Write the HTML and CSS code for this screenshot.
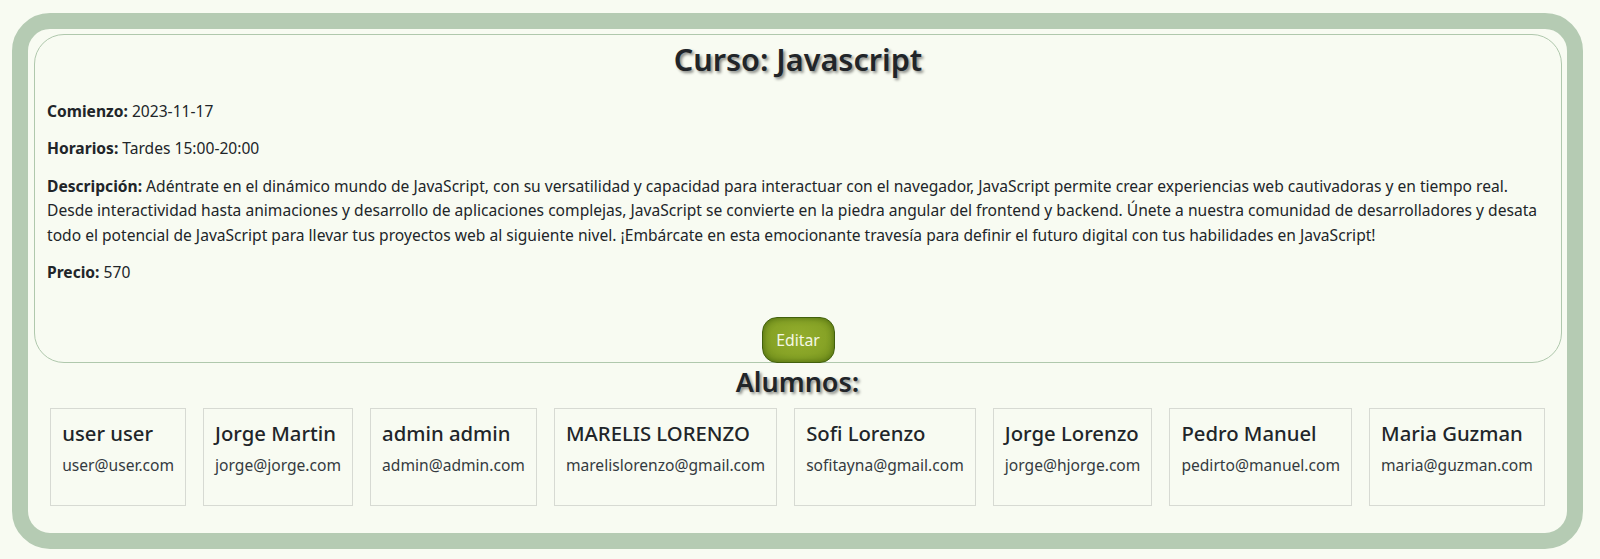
FILE: index.html
```html
<!DOCTYPE html>
<html lang="es">
<head>
<meta charset="utf-8">
<title>Curso: Javascript</title>
<link rel="stylesheet" href="styles.css">
</head>
<body>
<main class="frame">
  <section class="course">
    <h1 class="course-title">Curso: Javascript</h1>
    <p class="field"><strong>Comienzo:</strong> 2023-11-17</p>
    <p class="field"><strong>Horarios:</strong> Tardes 15:00-20:00</p>
    <p class="field"><strong>Descripción:</strong> Adéntrate en el dinámico mundo de JavaScript, con su versatilidad y capacidad para interactuar con el navegador, JavaScript permite crear experiencias web cautivadoras y en tiempo real.<br>Desde interactividad hasta animaciones y desarrollo de aplicaciones complejas, JavaScript se convierte en la piedra angular del frontend y backend. Únete a nuestra comunidad de desarrolladores y desata<br>todo el potencial de JavaScript para llevar tus proyectos web al siguiente nivel. ¡Embárcate en esta emocionante travesía para definir el futuro digital con tus habilidades en JavaScript!</p>
    <p class="field"><strong>Precio:</strong> 570</p>
    <div class="actions">
      <button class="btn-edit" type="button">Editar</button>
    </div>
  </section>
  <h2 class="students-title">Alumnos:</h2>
  <div class="students">
    <div class="student"><h3 class="student-name">user user</h3><p class="student-mail">user@user.com</p></div>
    <div class="student"><h3 class="student-name">Jorge Martin</h3><p class="student-mail">jorge@jorge.com</p></div>
    <div class="student"><h3 class="student-name">admin admin</h3><p class="student-mail">admin@admin.com</p></div>
    <div class="student"><h3 class="student-name">MARELIS LORENZO</h3><p class="student-mail">marelislorenzo@gmail.com</p></div>
    <div class="student"><h3 class="student-name">Sofi Lorenzo</h3><p class="student-mail">sofitayna@gmail.com</p></div>
    <div class="student"><h3 class="student-name">Jorge Lorenzo</h3><p class="student-mail">jorge@hjorge.com</p></div>
    <div class="student"><h3 class="student-name">Pedro Manuel</h3><p class="student-mail">pedirto@manuel.com</p></div>
    <div class="student"><h3 class="student-name">Maria Guzman</h3><p class="student-mail">maria@guzman.com</p></div>
  </div>
</main>
</body>
</html>
```
FILE: styles.css
```css
* { box-sizing: border-box; }

html, body {
  margin: 0;
  background: #f8fbf2;
}

body {
  font-family: "Noto Sans", "Open Sans", sans-serif;
  font-size: 15.6px;
  line-height: 24.5px;
  color: #212529;
  padding-top: 13px;
}

.frame {
  margin: 0 17px 0 12px;
  border: 16px solid #b5cbb3;
  border-radius: 38px;
  padding: 5px 5px 27px 5px;
  background: #f8fbf2;
}

.course {
  margin: 0 0 0 1px;
  border: 1px solid #b0c8ad;
  border-radius: 30px;
  padding: 5px 7px 0 7px;
}

.course-title {
  margin: 0 0 21px 0;
  font-size: 30.6px;
  line-height: 38px;
  font-weight: 600;
  text-align: center;
  color: #212529;
  text-shadow: 2px 2px 3px rgba(0, 0, 0, 0.45);
}

.field {
  margin: 0 0 12.8px 0;
  padding-left: 5px;
}

.field strong { font-weight: 700; }

.actions {
  display: flex;
  justify-content: center;
  padding-top: 20px;
  margin-bottom: -1px;
}

.btn-edit {
  font-family: inherit;
  font-size: 15.8px;
  line-height: 20px;
  color: #f4f7e4;
  width: 73px;
  height: 46px;
  border: 1px solid #42610d;
  border-radius: 15px;
  background: radial-gradient(ellipse at 50% 45%, #94ae2d 0%, #87a326 55%, #6f8d1a 100%);
  box-shadow: inset 0 0 6px rgba(40, 70, 0, 0.55);
  cursor: pointer;
  padding: 0;
}

.students-title {
  margin: 3px 0 10px 0;
  font-size: 27px;
  line-height: 32px;
  font-weight: 600;
  text-align: center;
  text-shadow: 2px 2px 3px rgba(0, 0, 0, 0.45);
}

.students {
  display: flex;
  justify-content: center;
  gap: 17px;
}

.student {
  border: 1px solid #d7dad3;
  padding: 12px 11px 12px 11px;
}

.student-name {
  margin: 0 0 8px 0;
  font-size: 20.3px;
  line-height: 24px;
  font-weight: 500;
  color: #212529;
  white-space: nowrap;
}

.student-mail {
  margin: 0 0 16px 0;
  font-size: 15.6px;
  line-height: 24px;
  color: #343a40;
  white-space: nowrap;
}
```
